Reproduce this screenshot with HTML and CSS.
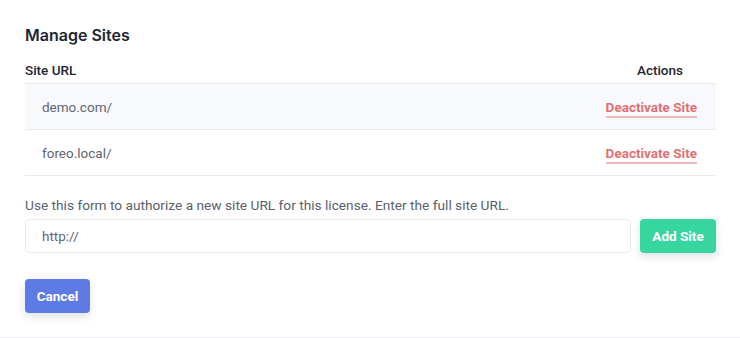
FILE: index.html
```html
<!DOCTYPE html>
<html lang="en">

<head>
    <meta charset="UTF-8">
    <meta name="viewport" content="width=device-width, initial-scale=1.0">
    <title>Manage Sites</title>
    <link rel="stylesheet" href="styles.css">
</head>

<body>
    <div class="panel">
        <h2 class="title">Manage Sites</h2>
        <table class="sites">
            <thead>
                <tr>
                    <th class="col-url">Site URL</th>
                    <th class="col-actions">Actions</th>
                </tr>
            </thead>
            <tbody>
                <tr class="striped">
                    <td>demo.com/</td>
                    <td class="action-cell"><a href="#" class="deactivate">Deactivate Site</a></td>
                </tr>
                <tr>
                    <td>foreo.local/</td>
                    <td class="action-cell"><a href="#" class="deactivate">Deactivate Site</a></td>
                </tr>
            </tbody>
        </table>

        <p class="help">Use this form to authorize a new site URL for this license. Enter the full site URL.</p>
        <div class="add-row">
            <input type="text" class="url-input" value="http://">
            <button class="btn btn-green">Add Site</button>
        </div>
        <button class="btn btn-blue">Cancel</button>
    </div>
</body>

</html>
```

FILE: styles.css
```css
body {
    font-family: Roboto, "Liberation Sans", sans-serif;
    margin: 0;
    background-color: #ffffff;
    color: #1f2937;
}

.panel {
    padding: 25px 24px 24px 25px;
    border-bottom: 1px solid #eceef1;
}

.title {
    font-family: Inter, Roboto, sans-serif;
    font-size: 16px;
    font-weight: 600;
    color: #1e2633;
    margin: 0 0 17px;
    line-height: 20px;
}

.sites {
    width: 100%;
    border-collapse: collapse;
    font-size: 13.5px;
}

.sites th {
    font-weight: 500;
    color: #1e2633;
    padding: 0 0 5px;
    line-height: 16px;
    border-bottom: 1px solid #e8eaee;
}

.col-url {
    text-align: left;
}

.col-actions {
    text-align: right;
    padding-right: 33px !important;
}

.sites td {
    height: 45px;
    padding: 0 17px;
    font-size: 13.5px;
    color: #5f6672;
    border-bottom: 1px solid #e8eaee;
}

.striped td {
    background-color: #f8f9fc;
}

.action-cell {
    text-align: right;
    padding-right: 19px !important;
}

.deactivate {
    color: #e46f72;
    font-weight: 700;
    font-size: 13.5px;
    text-decoration: none;
    border-bottom: 2px solid #f2b8b9;
    padding-bottom: 1px;
}

.help {
    margin: 21px 0 6px;
    font-size: 13.7px;
    color: #5a616d;
    line-height: 16px;
}

.add-row {
    display: flex;
    gap: 9px;
    align-items: center;
}

.url-input {
    flex: 1;
    height: 34px;
    box-sizing: border-box;
    border: 1px solid #e6e8ec;
    border-radius: 4px;
    padding: 0 16px;
    font-family: Roboto, sans-serif;
    font-size: 13.5px;
    color: #5f6672;
}

.btn {
    border: none;
    border-radius: 4px;
    color: #ffffff;
    font-family: Roboto, sans-serif;
    font-weight: 700;
    font-size: 13.5px;
    height: 34px;
    padding: 0 10px;
    box-shadow: 0 4px 8px rgba(50, 60, 90, 0.15);
}

.btn-green {
    background-color: #38d69f;
    width: 76px;
}

.btn-blue {
    background-color: #5e7ae4;
    width: 65px;
    margin-top: 26px;
}
```
